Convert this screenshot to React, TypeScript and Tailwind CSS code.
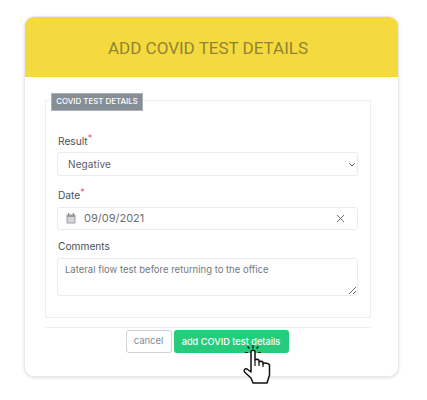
import React from "react";

function Calendar() {
  return (
    <svg width="10" height="11" viewBox="0 0 10 11" className="shrink-0">
      <rect x="0.5" y="1.5" width="9" height="9" rx="1" fill="#9a9da1" />
      <rect x="1.5" y="4" width="7" height="5.5" fill="#d4d6d8" />
      <rect x="2" y="0" width="1.2" height="2.5" fill="#85888c" />
      <rect x="6.8" y="0" width="1.2" height="2.5" fill="#85888c" />
    </svg>
  );
}

function Hand() {
  return (
    <svg width="30" height="41" viewBox="0 0 30 41" className="absolute left-[242px] top-[344px]">
      <path d="M11 1v3.5M5.5 2.5l2 2M16.5 2.5l-2 2M3 8.5h3M16 8.5h3" stroke="#111" strokeWidth="1.2" fill="none" />
      <path
        d="M9 8C9 5.5 13 5.5 13 8V16C13 15 17 15 17 16.5V18C17 17 21 17 21 18.5V20C21.5 18.5 27.5 19 27.5 21.5V31L25 39H11L9 34L2.5 28C1.5 26 3 24 5 25L9 28Z"
        fill="#fff"
        stroke="#111"
        strokeWidth="1.5"
        strokeLinejoin="round"
      />
      <path d="M13 16v6M17 18v4M21 20v3" stroke="#111" strokeWidth="1.2" />
    </svg>
  );
}

export default function App() {
  return (
    <div className="relative w-[427px] h-[400px] bg-white font-['Inter',sans-serif] overflow-hidden pt-4 pl-6">
      <div className="w-[375px] h-[361px] rounded-[10px] bg-white border border-[#e9eaec] shadow-[0_1px_3px_rgba(0,0,0,0.12)] overflow-hidden">
        <div className="h-[60px] bg-[#f5da3f] flex items-center justify-center pr-[7px] pt-[3px]">
          <h1 className="font-['Roboto',sans-serif] text-[17px] text-[#8f8432]">ADD COVID TEST DETAILS</h1>
        </div>
        <div className="relative mt-[23px] ml-5 w-[326px] h-[218px] border border-[#eceef0] px-[11px] pt-[33px]">
          <div className="absolute -top-2 left-[5px] w-[92px] h-[18px] bg-[#868e96] flex items-center justify-center text-[7.9px] font-medium text-white whitespace-nowrap border border-[#adb2b8]">
            COVID TEST DETAILS
          </div>
          <label className="block pl-px text-[10.2px] leading-[14px] text-[#495057]">
            Result<span className="text-[#f0506e] text-[9px] leading-[8px] align-top">*</span>
          </label>
          <div className="relative mt-[4px] w-[301px] h-[24px]">
            <select
              defaultValue="Negative"
              className="appearance-none block w-full h-full rounded-[3px] border border-[#e9ecef] bg-white pl-[10px] text-[10px] tracking-[0.1px] text-[#5b6167] outline-none"
            >
              <option>Negative</option>
              <option>Positive</option>
            </select>
            <svg width="6" height="4" viewBox="0 0 6 4" className="absolute right-[3px] top-[11px]">
              <path d="M0.5 0.5L3 3L5.5 0.5" stroke="#555" strokeWidth="1" fill="none" />
            </svg>
          </div>
          <label className="block mt-[12px] pl-px text-[10.2px] leading-[14px] text-[#495057]">
            Date<span className="text-[#f0506e] text-[9px] leading-[8px] align-top">*</span>
          </label>
          <div className="mt-[5px] flex items-center w-[301px] h-[23px] rounded-[3px] border border-[#e9ecef] pl-[8px] pr-[12px]">
            <Calendar />
            <span className="ml-[8px] text-[11px] text-[#6c7176]">09/09/2021</span>
            <svg width="9" height="9" viewBox="0 0 9 9" className="ml-auto">
              <path d="M1 1l7 7M8 1l-7 7" stroke="#6f7377" strokeWidth="1" />
            </svg>
          </div>
          <label className="block mt-[9px] pl-px text-[10.2px] leading-[14px] text-[#495057]">Comments</label>
          <textarea
            readOnly
            defaultValue="Lateral flow test before returning to the office"
            className="mt-[5px] block w-[301px] h-[38px] rounded-[3px] border border-[#e9ecef] pl-[7px] pt-[4px] text-[9.5px] leading-[14px] text-[#74797e] outline-none"
          />
        </div>
        <div className="mt-[9px] ml-5 w-[326px] border-t border-[#eceef0] pt-[2px] flex justify-center gap-[2px] pr-[2px]">
          <button className="w-[46px] h-[23px] rounded-[3px] border border-[#ced4da] bg-white text-[9.5px] text-[#868e96]">cancel</button>
          <button className="w-[115px] h-[23px] rounded-[3px] bg-[#26cc7c] text-[9.2px] font-medium text-white">add COVID test details</button>
        </div>
      </div>
      <Hand />
    </div>
  );
}
